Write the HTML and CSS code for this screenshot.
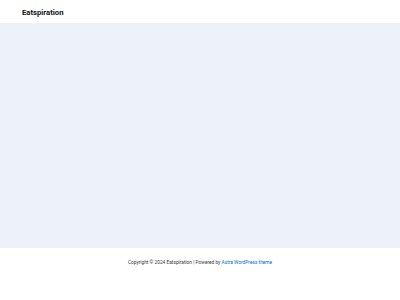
FILE: index.html
```html
<!DOCTYPE html>
<html>
  <head>
    <meta charset="UTF-8">
    <title>Eatspiration</title>
    <link rel="stylesheet" href="styles.css">
  </head>
  <body>
    <header class="site-header">
      <div class="site-title">Eatspiration</div>
    </header>

    <main class="site-content"></main>

    <footer class="site-footer">
      <p class="copyright">
        Copyright © 2024 Eatspiration | Powered by <a href="#">Astra WordPress theme</a>
      </p>
    </footer>
  </body>
</html>
```

FILE: styles.css
```css
body {
  font-family: Roboto, "Liberation Sans", sans-serif;
  margin: 0;
  padding: 0;
  height: 300px;
  display: flex;
  flex-direction: column;
  background-color: #fff;
}

.site-header {
  height: 23px;
  display: flex;
  align-items: center;
  padding: 1px 22px 0;
  box-sizing: border-box;
  background-color: #fff;
}

.site-title {
  font-size: 7.7px;
  font-weight: 700;
  color: #111;
}

.site-content {
  height: 225px;
  background-color: #edf1f9;
}

.site-footer {
  flex: 1;
  background-color: #fff;
  display: flex;
  justify-content: center;
  padding-top: 12px;
}

.copyright {
  margin: 0;
  font-size: 4.8px;
  color: #3a3a3a;
}

.copyright a {
  color: #0170b9;
  text-decoration: none;
}
```
